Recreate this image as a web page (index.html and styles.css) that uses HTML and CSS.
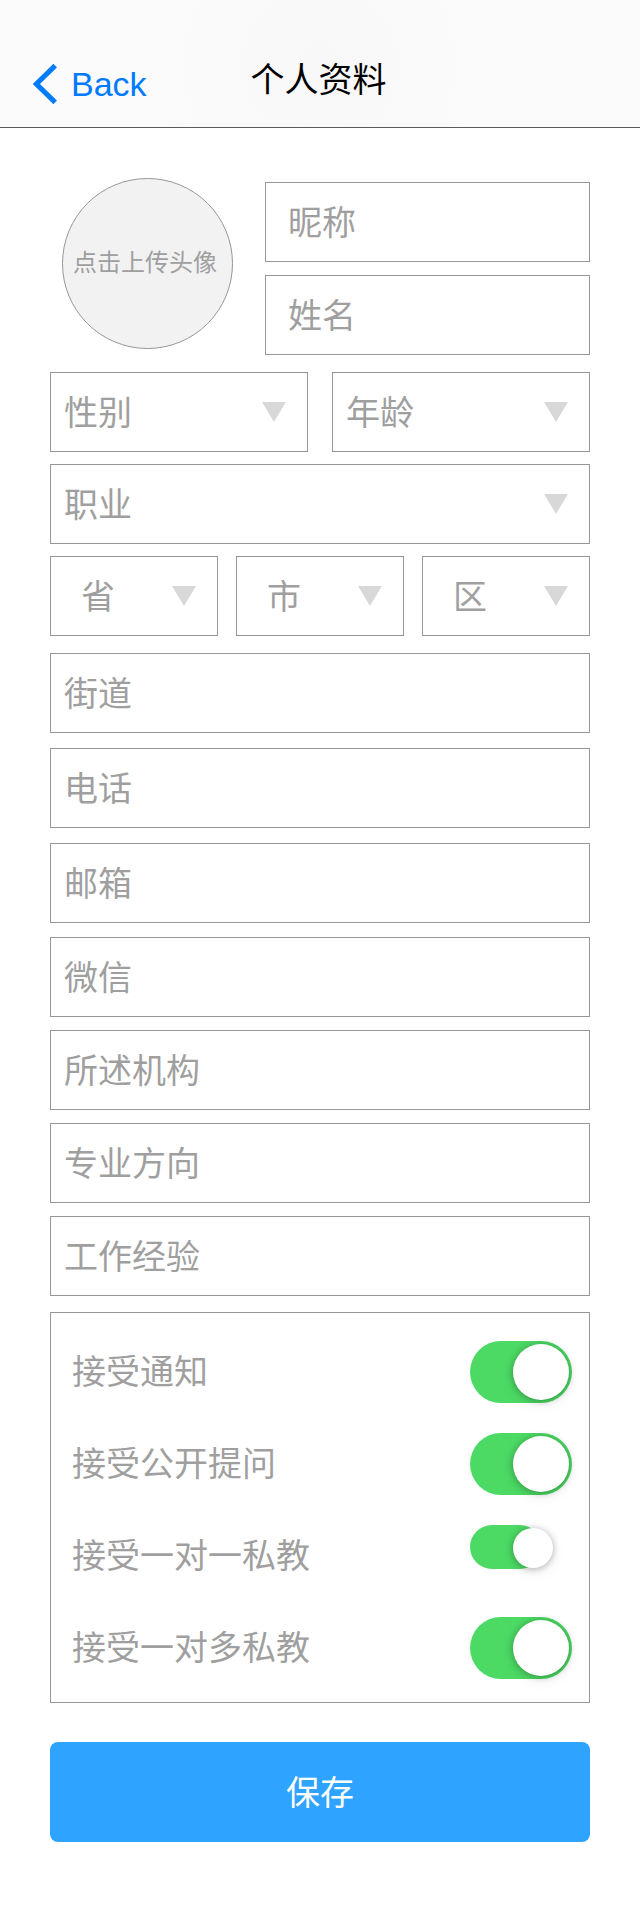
FILE: index.html
```html
<!DOCTYPE html>
<html lang="zh-CN">
<head>
  <meta charset="utf-8">
  <meta name="viewport" content="width=device-width, initial-scale=1">
  <title>个人资料</title>
  <link rel="stylesheet" href="styles.css">
</head>
<body>
  <header class="navbar">
    <a class="navbar-back" href="#">
      <svg class="navbar-chevron" viewBox="0 0 24 42" width="24" height="42" aria-hidden="true">
        <path d="M22.2 2.6 3.4 21 22.2 39.4" fill="none" stroke="currentColor" stroke-width="5"/>
      </svg>
      <span>Back</span>
    </a>
    <h1 class="navbar-title">个人资料</h1>
  </header>

  <form class="profile" action="#">
    <div class="identity">
      <button class="avatar" type="button">点击上传头像</button>
      <div class="identity-fields">
        <input class="field field-indent" type="text" aria-label="昵称" placeholder="昵称">
        <input class="field field-indent" type="text" aria-label="姓名" placeholder="姓名">
      </div>
    </div>

    <div class="group group-selects">
      <div class="columns columns-two">
        <div class="picker"><select class="field" aria-label="性别"><option>性别</option></select></div>
        <div class="picker"><select class="field" aria-label="年龄"><option>年龄</option></select></div>
      </div>
      <div class="picker"><select class="field" aria-label="职业"><option>职业</option></select></div>
      <div class="columns columns-three">
        <div class="picker"><select class="field field-region" aria-label="省"><option>省</option></select></div>
        <div class="picker"><select class="field field-region" aria-label="市"><option>市</option></select></div>
        <div class="picker"><select class="field field-region" aria-label="区"><option>区</option></select></div>
      </div>
    </div>

    <div class="group group-contact">
      <input class="field" type="text" aria-label="街道" placeholder="街道">
      <input class="field" type="tel" aria-label="电话" placeholder="电话">
      <input class="field" type="email" aria-label="邮箱" placeholder="邮箱">
    </div>

    <div class="group group-work">
      <input class="field" type="text" aria-label="微信" placeholder="微信">
      <input class="field" type="text" aria-label="所述机构" placeholder="所述机构">
      <input class="field" type="text" aria-label="专业方向" placeholder="专业方向">
      <input class="field" type="text" aria-label="工作经验" placeholder="工作经验">
    </div>

    <div class="settings">
      <div class="setting">
        <label class="setting-label" for="notify">接受通知</label>
        <input class="switch" id="notify" type="checkbox" role="switch" checked>
      </div>
      <div class="setting">
        <label class="setting-label" for="public">接受公开提问</label>
        <input class="switch" id="public" type="checkbox" role="switch" checked>
      </div>
      <div class="setting">
        <label class="setting-label" for="single">接受一对一私教</label>
        <input class="switch switch-small" id="single" type="checkbox" role="switch" checked>
      </div>
      <div class="setting">
        <label class="setting-label" for="multi">接受一对多私教</label>
        <input class="switch" id="multi" type="checkbox" role="switch" checked>
      </div>
    </div>

    <button class="save" type="submit">保存</button>
  </form>
</body>
</html>
```

FILE: styles.css
```css
:root {
  --line: #979797;
  --muted: #9f9f9f;
  --arrow: #d8d8d8;
  --blue: #007aff;
  --green: #4cd964;
  --cjk: "Noto Sans CJK SC", "Liberation Sans", sans-serif;
}

* {
  box-sizing: border-box;
}

body {
  margin: 0;
  background: #fff;
  font-family: var(--cjk);
  font-size: 34px;
}

button,
input,
select {
  margin: 0;
  font: inherit;
}

/* Navigation bar */
.navbar {
  display: grid;
  grid-template-columns: 1fr auto 1fr;
  align-items: start;
  min-height: 128px;
  padding: 58px 36px 0 33px;
  border-bottom: 1px solid #5c5c5e;
  background: radial-gradient(circle at 50% 50%, #f8f8f8, #fbfbfb 60%);
}

.navbar-back {
  display: flex;
  align-items: center;
  gap: 14px;
  padding-top: 5px;
  color: var(--blue);
  font-family: "Liberation Sans", Arial, sans-serif;
  line-height: 40px;
  text-decoration: none;
}

.navbar-chevron {
  display: block;
}

.navbar-title {
  margin: 0;
  color: #000;
  font-size: 34px;
  font-weight: 400;
  line-height: 40px;
}

/* Form */
.profile {
  padding: 50px 50px 63px;
}

.identity {
  display: flex;
  align-items: start;
  gap: 32px;
  padding-left: 12px;
}

.avatar {
  flex: none;
  width: 171px;
  height: 171px;
  padding: 0 5px 7px 0;
  border: 1px solid var(--line);
  border-radius: 50%;
  background: #f2f2f2;
  color: var(--muted);
  font-size: 24px;
  white-space: nowrap;
}

.identity-fields {
  display: grid;
  flex: 1;
  gap: 13px;
  min-width: 0;
  padding-top: 4px;
}

.group {
  display: grid;
}

.group-selects {
  gap: 12px;
  margin-top: 17px;
}

.group-contact {
  gap: 15px;
  margin-top: 17px;
}

.group-work {
  gap: 13px;
  margin-top: 14px;
}

.columns {
  display: grid;
}

.columns-two {
  grid-template-columns: 1fr 1fr;
  gap: 24px;
}

.columns-three {
  grid-template-columns: 1fr 1fr 1fr;
  gap: 18px;
}

.field {
  display: block;
  width: 100%;
  height: 80px;
  padding: 0 13px 4px;
  border: 1px solid var(--line);
  border-radius: 0;
  background: #fff;
  color: var(--muted);
  appearance: none;
}

.field::placeholder {
  color: var(--muted);
  opacity: 1;
}

.field-indent {
  padding-left: 22px;
}

.field-region {
  padding-left: 30px;
}

/* Select with the arrow stacked in the same grid cell */
.picker {
  display: grid;
  align-items: center;
}

.picker .field,
.picker::after {
  grid-area: 1 / 1;
}

.picker::after {
  content: "";
  z-index: 1;
  justify-self: end;
  width: 24px;
  height: 20px;
  margin-right: 22px;
  background: var(--arrow);
  clip-path: polygon(0 0, 100% 0, 50% 100%);
  pointer-events: none;
}

/* Switch list */
.settings {
  margin-top: 16px;
  padding: 13px 17px 8px 21px;
  border: 1px solid var(--line);
}

.setting {
  display: grid;
  grid-template-columns: 1fr 102px;
  height: 92px;
  padding-top: 15px;
}

.setting-label {
  color: var(--muted);
  line-height: 58px;
}

.switch {
  width: 102px;
  height: 62px;
  border-radius: 31px;
  background: var(--green);
  appearance: none;
}

.switch::before {
  content: "";
  display: block;
  width: 56px;
  height: 56px;
  margin: 3px 0 0 43px;
  border-radius: 50%;
  background: #fff;
  box-shadow: 0 1px 7px rgba(0, 0, 0, 0.3), 0 4px 16px rgba(0, 0, 0, 0.06);
}

.switch-small {
  width: 72px;
  height: 44px;
  border-radius: 22px;
}

.switch-small::before {
  width: 40px;
  height: 40px;
}

.save {
  display: block;
  width: 100%;
  height: 100px;
  margin-top: 39px;
  padding: 0 0 4px;
  border: 0;
  border-radius: 8px;
  background: #2ea3ff;
  color: #fff;
}
```
